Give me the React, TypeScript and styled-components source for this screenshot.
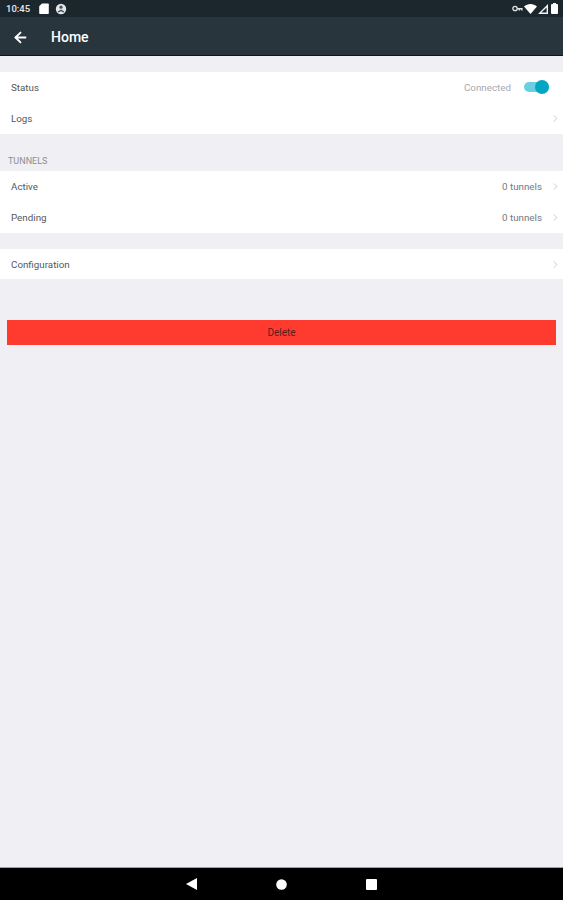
import React from 'react'
import styled, { createGlobalStyle } from 'styled-components'
import { ArrowLeft, ChevronRight } from 'lucide-react'

const GlobalStyle = createGlobalStyle`
  html, body {
    margin: 0;
    padding: 0;
    height: 100%;
    background: #efeff4;
  }

  #root {
    height: 100%;
  }

  * {
    box-sizing: border-box;
  }
`

const App: React.FC = () => {
  return (
    <Screen>
      <GlobalStyle />
      <StatusBar>
        <LeftIcons>
          <Clock>10:45</Clock>
          <svg width="10" height="11" viewBox="0 0 10 11">
            <path d="M3 .5h6a.8.8 0 0 1 .8.8v8.9a.8.8 0 0 1-.8.8H1a.8.8 0 0 1-.8-.8V3.3z" fill="#fff" />
          </svg>
          <svg width="12" height="12" viewBox="0 0 12 12">
            <circle cx="6" cy="6" r="5.2" fill="#e4e7e8" />
            <circle cx="6" cy="4.2" r="1.6" fill="#46535a" />
            <path d="M2.6 8.6 6 6.4l3.4 2.2-1 1L6 8.2 3.6 9.6z" fill="#46535a" />
          </svg>
        </LeftIcons>
        <RightIcons>
          <svg width="11" height="7" viewBox="0 0 11 7">
            <circle cx="3" cy="3.5" r="2.2" fill="none" stroke="#dfe3e4" strokeWidth="1.3" />
            <path d="M5 3h5.6v2.6H9.2V4.4H8v1.2H6.6V4.4H5z" fill="#dfe3e4" />
          </svg>
          <svg width="13" height="10" viewBox="0 0 13 10">
            <path d="M0 2.6C3.6-.8 9.4-.8 13 2.6L6.5 10z" fill="#fff" />
          </svg>
          <svg width="10" height="10" viewBox="0 0 10 10">
            <path d="M10 0v10H0zM8.6 3.4 3.4 8.6h5.2z" fill="#f2f4f4" fillRule="evenodd" />
          </svg>
          <svg width="7" height="11" viewBox="0 0 7 11">
            <path d="M2 0h3v1h1a1 1 0 0 1 1 1v8a1 1 0 0 1-1 1H1a1 1 0 0 1-1-1V2a1 1 0 0 1 1-1h1z" fill="#fff" />
          </svg>
        </RightIcons>
      </StatusBar>

      <AppBar>
        <ArrowLeft size={17} color="#ffffff" strokeWidth={2.6} />
        <Title>Home</Title>
      </AppBar>

      <Content>
        <Section>
          <StatusRow>
            <RowLabel>Status</RowLabel>
            <StatusValue>Connected</StatusValue>
            <Toggle>
              <ToggleThumb />
            </Toggle>
          </StatusRow>
          <Row>
            <RowLabel>Logs</RowLabel>
            <Chevron />
          </Row>
        </Section>

        <SectionHeader>TUNNELS</SectionHeader>
        <Section>
          <Row>
            <RowLabel>Active</RowLabel>
            <RowValue>0 tunnels</RowValue>
            <Chevron />
          </Row>
          <Row>
            <RowLabel>Pending</RowLabel>
            <RowValue>0 tunnels</RowValue>
            <Chevron />
          </Row>
        </Section>

        <ConfigSection>
          <ConfigRow>
            <RowLabel>Configuration</RowLabel>
            <Chevron />
          </ConfigRow>
        </ConfigSection>

        <DeleteButton>Delete</DeleteButton>
      </Content>

      <NavBar>
        <svg width="11" height="12" viewBox="0 0 11 12">
          <path d="M11 0v12L0 6z" fill="#fff" />
        </svg>
        <svg width="11" height="11" viewBox="0 0 11 11">
          <circle cx="5.5" cy="5.5" r="5.3" fill="#fff" />
        </svg>
        <svg width="11" height="11" viewBox="0 0 11 11">
          <rect width="11" height="11" rx="1" fill="#fff" />
        </svg>
      </NavBar>
    </Screen>
  )
}

const Chevron = () => (
  <ChevronSlot>
    <ChevronRight size={11} color="#c4c4c8" strokeWidth={2} />
  </ChevronSlot>
)

const Screen = styled.div`
  height: 900px;
  display: flex;
  flex-direction: column;
  background: #efeff4;
  font-family: Roboto, "Liberation Sans", sans-serif;
  overflow: hidden;
`

const StatusBar = styled.div`
  height: 17px;
  flex: none;
  display: flex;
  align-items: center;
  justify-content: space-between;
  padding: 0 5px 0 6px;
  background: #1c262d;
`

const LeftIcons = styled.div`
  display: flex;
  align-items: center;
  gap: 6px;
`

const RightIcons = styled.div`
  display: flex;
  align-items: center;
  gap: 1px;

  svg:last-child {
    margin-left: 2px;
  }
`

const Clock = styled.span`
  margin-right: 3px;
  color: #e6e9ea;
  font-size: 9.5px;
  font-weight: 500;
`

const AppBar = styled.div`
  height: 39px;
  flex: none;
  display: flex;
  align-items: center;
  padding: 2px 0 0 12px;
  background: #28353d;
  border-bottom: 1.5px solid #10161a;
`

const Title = styled.h1`
  margin: 0 0 0 22px;
  color: #ffffff;
  font-size: 14px;
  font-weight: 500;
`

const Content = styled.main`
  flex: 1;
  display: flex;
  flex-direction: column;
  padding-top: 16px;
`

const Section = styled.section`
  background: #ffffff;
`

const ConfigSection = styled(Section)`
  margin-top: 16px;
`

const SectionHeader = styled.h2`
  height: 37px;
  margin: 0;
  padding: 21px 0 0 8px;
  color: #8e8e93;
  font-size: 9px;
  font-weight: 400;
  line-height: 12px;
`

const Row = styled.div`
  height: 31px;
  display: flex;
  align-items: center;
  padding: 0 2px 0 11px;
`

const StatusRow = styled(Row)`
  padding-bottom: 1px;
`

const ConfigRow = styled(Row)`
  height: 30px;
`

const RowLabel = styled.span`
  margin-right: auto;
  color: #55595c;
  font-size: 9.8px;
`

const RowValue = styled.span`
  color: #77797c;
  font-size: 9.8px;
`

const StatusValue = styled(RowValue)`
  color: #a8a9ad;
`

const ChevronSlot = styled.span`
  width: 11px;
  margin-left: 8px;
  display: flex;
  align-items: center;
`

const Toggle = styled.span`
  position: relative;
  width: 25px;
  height: 10px;
  margin: 0 12px 0 13px;
  border-radius: 5px;
  background: #68d0de;
`

const ToggleThumb = styled.span`
  position: absolute;
  top: -2px;
  right: 0;
  width: 14px;
  height: 14px;
  border-radius: 50%;
  background: #04a5c2;
`

const DeleteButton = styled.button`
  height: 25px;
  margin: 41px 7px 0;
  padding: 0;
  border: none;
  background: #ff3b30;
  color: #5a2020;
  font-family: inherit;
  font-size: 10px;
`

const NavBar = styled.nav`
  height: 33px;
  flex: none;
  display: flex;
  align-items: center;
  justify-content: center;
  gap: 79px;
  background: #000000;
  border-top: 1px solid #a0a0a0;
  padding-right: 1px;
`

export default App
